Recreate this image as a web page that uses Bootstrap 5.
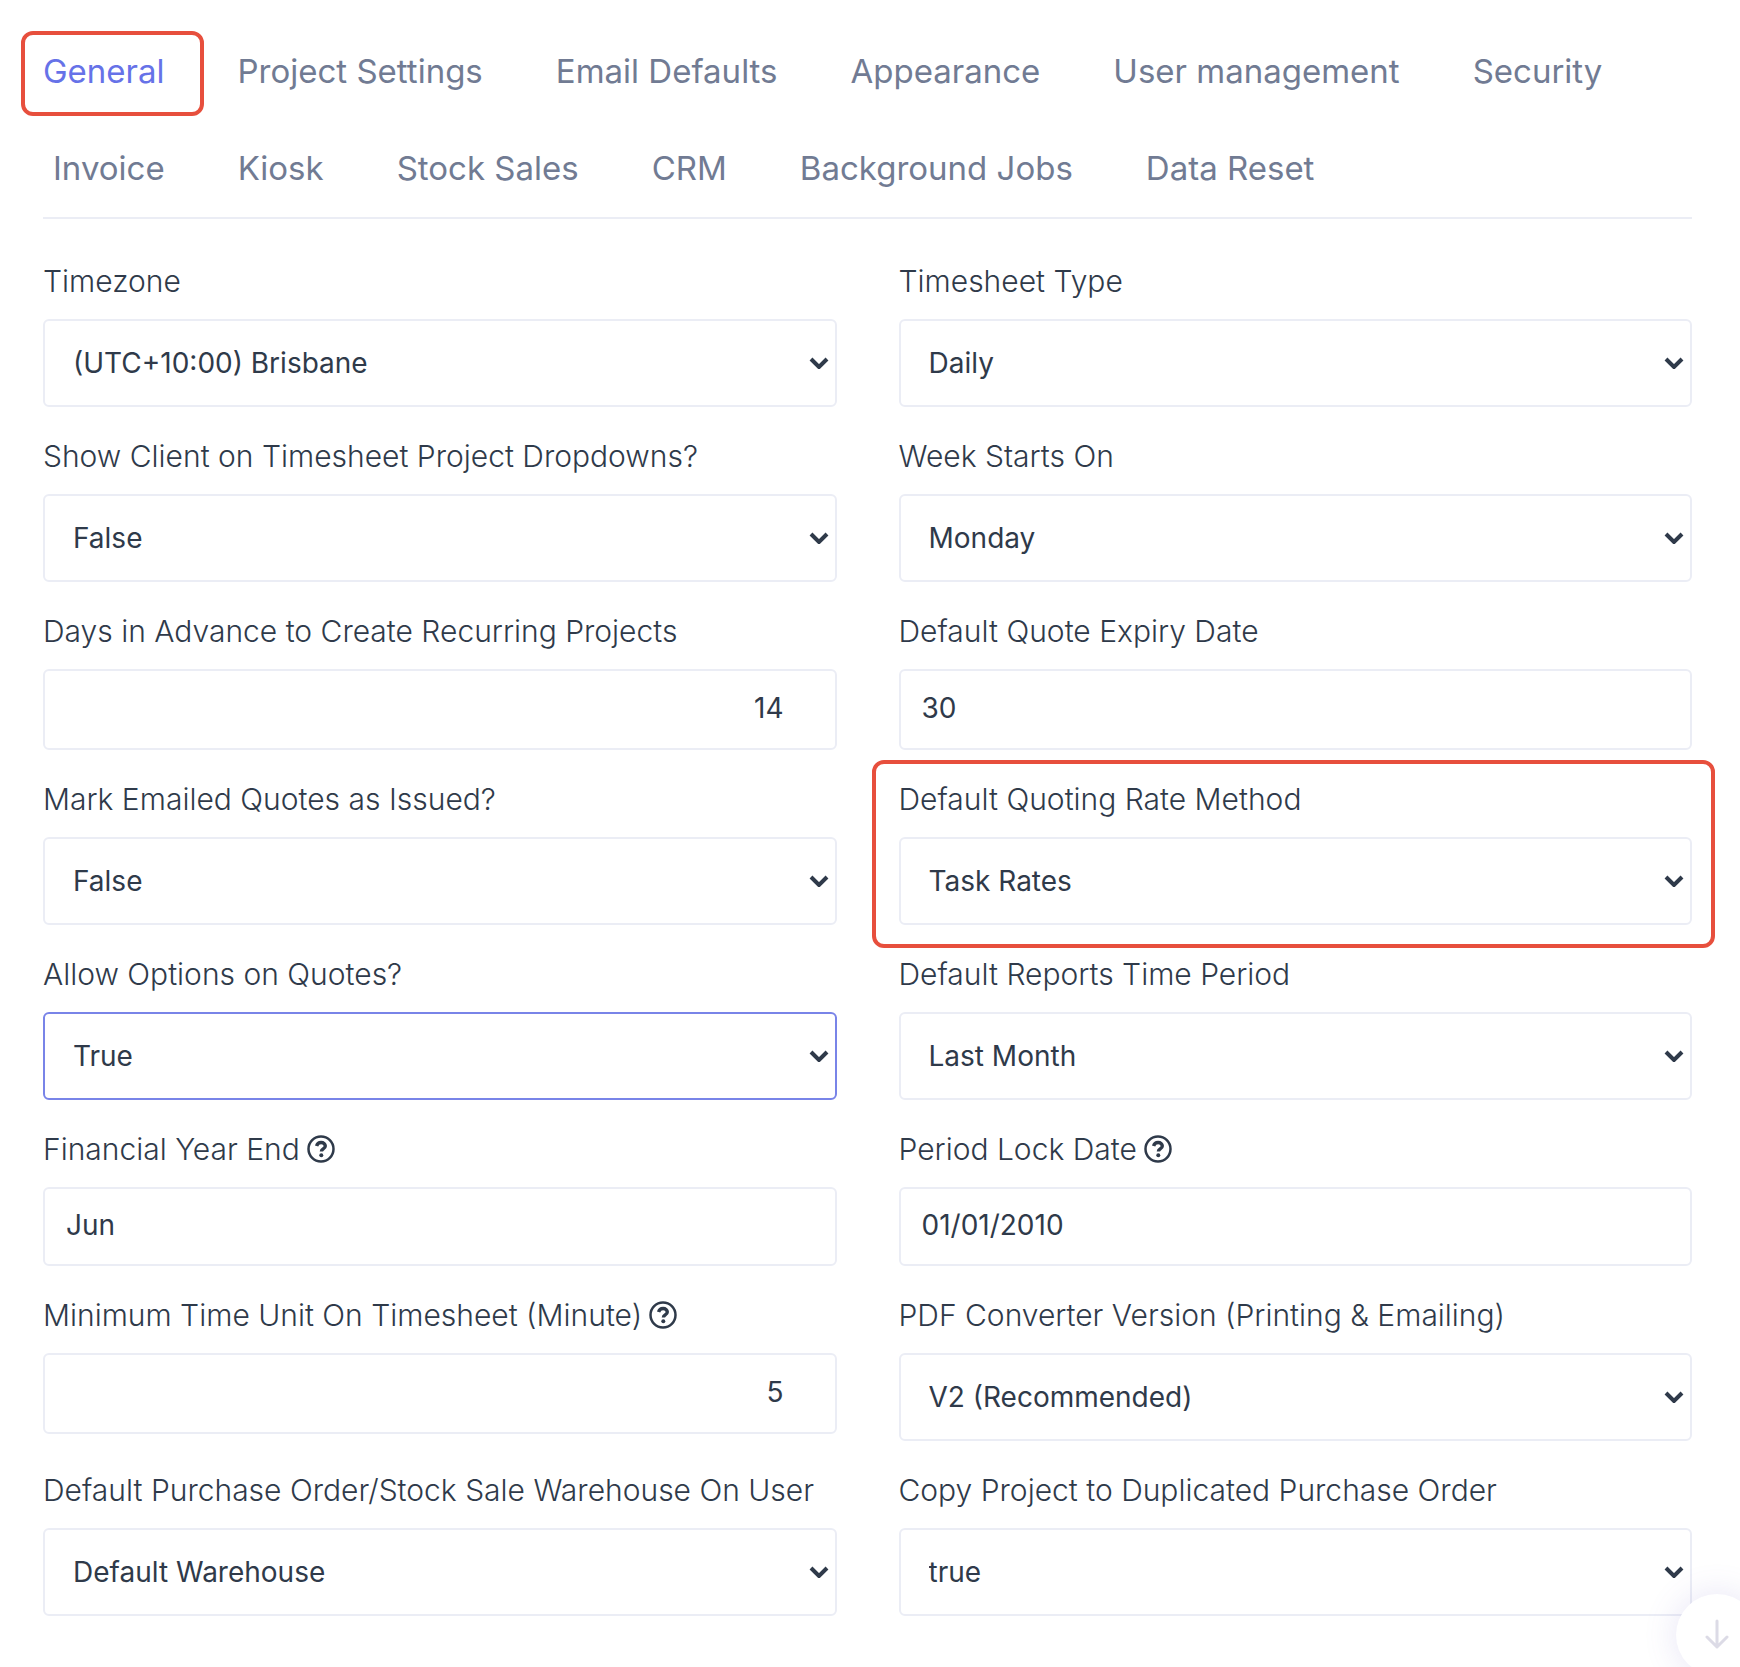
<!DOCTYPE html>
<html lang="en">
<head>
<meta charset="utf-8">
<meta name="viewport" content="width=device-width, initial-scale=1">
<title>System Settings</title>
<link href="https://cdn.jsdelivr.net/npm/bootstrap@5.3.0/dist/css/bootstrap.min.css" rel="stylesheet">
<style>
  :root {
    --ink: #2f3a4a;
    --line: #ebedf5;
    --accent: #6672e8;
    --callout: #e74f3d;
  }
  body { font-family: Inter, "Open Sans", sans-serif; color: var(--ink); background: #fff; }
  .settings-page { padding: 23px 48px 24px 43px; }

  .settings-tabs { column-gap: 63px; border-bottom: 2px solid var(--line); }
  .settings-tabs .nav-link { padding: 0 0 0 10px; font-size: 33px; line-height: 97px; color: #717b93; }
  .settings-tabs .nav-item:first-child .nav-link { padding-left: 0; }
  .settings-tabs .nav-link.active { color: var(--accent); }

  .settings-grid { --bs-gutter-x: 62px; padding-top: 40px; }
  .field { margin-bottom: 27px; }
  .field .form-label { display: flex; align-items: center; gap: 7px; margin-bottom: 16px; font-size: 30px; font-weight: 300; line-height: 44px; white-space: nowrap; }
  .field .form-select, .field .form-control { border: 2px solid var(--line); border-radius: 6px; font-size: 28px; line-height: 40px; color: var(--ink); background-color: #fff; box-shadow: none; }
  .field .form-select {
    height: 88px; padding: 0 54px 0 28px;
    background-image: url("data:image/svg+xml,%3Csvg xmlns='http://www.w3.org/2000/svg' viewBox='0 0 20 12'%3E%3Cpath d='M2 2l8 8 8-8' fill='none' stroke='%232f3a4a' stroke-width='4'/%3E%3C/svg%3E");
    background-size: 20px 12px; background-position: right 6px center;
  }
  .field .form-control { height: 81px; padding: 0 51px 4px 21px; }
  .field .form-control.picker { height: 79px; }
  .field .form-select.current { border-color: #7984e8; }
  .help-icon { width: 28px; height: 28px; flex: none; }

  .callout { position: relative; }
  .callout::after { content: ""; position: absolute; border: 4px solid var(--callout); border-radius: 12px; pointer-events: none; }
  .callout-tab::after { inset: 8px -39px 4px -22px; }
  .callout-field::after { inset: -17px -23px -23px -27px; }

  .scroll-btn { position: fixed; right: -18px; bottom: -9px; width: 82px; height: 82px; border: 0; border-radius: 50%; background: #fff; box-shadow: 0 0 34px rgba(100, 90, 190, .16); }
</style>
</head>
<body>
<main class="settings-page">
  <ul class="nav settings-tabs">
    <li class="nav-item callout callout-tab"><a class="nav-link active" href="#general" aria-current="page">General</a></li>
    <li class="nav-item"><a class="nav-link" href="#project">Project Settings</a></li>
    <li class="nav-item"><a class="nav-link" href="#email">Email Defaults</a></li>
    <li class="nav-item"><a class="nav-link" href="#appearance">Appearance</a></li>
    <li class="nav-item"><a class="nav-link" href="#users">User management</a></li>
    <li class="nav-item"><a class="nav-link" href="#security">Security</a></li>
    <li class="nav-item"><a class="nav-link" href="#invoice">Invoice</a></li>
    <li class="nav-item"><a class="nav-link" href="#kiosk">Kiosk</a></li>
    <li class="nav-item"><a class="nav-link" href="#stock">Stock Sales</a></li>
    <li class="nav-item"><a class="nav-link" href="#crm">CRM</a></li>
    <li class="nav-item"><a class="nav-link" href="#jobs">Background Jobs</a></li>
    <li class="nav-item"><a class="nav-link" href="#reset">Data Reset</a></li>
  </ul>

  <form class="row settings-grid" id="general">
    <div class="col-6"><div class="field">
      <label class="form-label" for="timezone">Timezone</label>
      <select class="form-select" id="timezone"><option>(UTC+10:00) Brisbane</option></select>
    </div></div>
    <div class="col-6"><div class="field">
      <label class="form-label" for="sheetType">Timesheet Type</label>
      <select class="form-select" id="sheetType"><option>Daily</option></select>
    </div></div>

    <div class="col-6"><div class="field">
      <label class="form-label" for="showClient">Show Client on Timesheet Project Dropdowns?</label>
      <select class="form-select" id="showClient"><option>False</option><option>True</option></select>
    </div></div>
    <div class="col-6"><div class="field">
      <label class="form-label" for="weekStart">Week Starts On</label>
      <select class="form-select" id="weekStart"><option>Monday</option></select>
    </div></div>

    <div class="col-6"><div class="field">
      <label class="form-label" for="daysAdvance">Days in Advance to Create Recurring Projects</label>
      <input class="form-control text-end" id="daysAdvance" type="text" inputmode="numeric" value="14">
    </div></div>
    <div class="col-6"><div class="field">
      <label class="form-label" for="quoteExpiry">Default Quote Expiry Date</label>
      <input class="form-control" id="quoteExpiry" type="text" value="30">
    </div></div>

    <div class="col-6"><div class="field">
      <label class="form-label" for="markIssued">Mark Emailed Quotes as Issued?</label>
      <select class="form-select" id="markIssued"><option>False</option><option>True</option></select>
    </div></div>
    <div class="col-6"><div class="field callout callout-field">
      <label class="form-label" for="rateMethod">Default Quoting Rate Method</label>
      <select class="form-select" id="rateMethod"><option>Task Rates</option></select>
    </div></div>

    <div class="col-6"><div class="field">
      <label class="form-label" for="allowOptions">Allow Options on Quotes?</label>
      <select class="form-select current" id="allowOptions"><option>True</option><option>False</option></select>
    </div></div>
    <div class="col-6"><div class="field">
      <label class="form-label" for="reportPeriod">Default Reports Time Period</label>
      <select class="form-select" id="reportPeriod"><option>Last Month</option></select>
    </div></div>

    <div class="col-6"><div class="field">
      <label class="form-label" for="yearEnd">Financial Year End
        <svg class="help-icon" viewBox="0 0 28 28" fill="none" stroke="currentColor" aria-hidden="true"><circle cx="14" cy="14" r="12.5" stroke-width="2.5"/><path d="M9.6 11c.6-2.300 2.200-3.500 4.500-3.500 2.400 0 4.200 1.400 4.200 3.500 0 2.900-3.900 2.900-3.900 5.400" stroke-width="3.400"/><circle cx="14.300" cy="20.300" r="2" fill="currentColor" stroke="none"/></svg></label>
      <input class="form-control picker" id="yearEnd" type="text" value="Jun">
    </div></div>
    <div class="col-6"><div class="field">
      <label class="form-label" for="lockDate">Period Lock Date
        <svg class="help-icon" viewBox="0 0 28 28" fill="none" stroke="currentColor" aria-hidden="true"><circle cx="14" cy="14" r="12.5" stroke-width="2.5"/><path d="M9.6 11c.6-2.300 2.200-3.500 4.500-3.500 2.400 0 4.200 1.400 4.200 3.500 0 2.900-3.900 2.900-3.900 5.400" stroke-width="3.400"/><circle cx="14.300" cy="20.300" r="2" fill="currentColor" stroke="none"/></svg></label>
      <input class="form-control picker" id="lockDate" type="text" value="01/01/2010">
    </div></div>

    <div class="col-6"><div class="field">
      <label class="form-label" for="timeUnit">Minimum Time Unit On Timesheet (Minute)
        <svg class="help-icon" viewBox="0 0 28 28" fill="none" stroke="currentColor" aria-hidden="true"><circle cx="14" cy="14" r="12.5" stroke-width="2.5"/><path d="M9.6 11c.6-2.300 2.200-3.500 4.500-3.500 2.400 0 4.200 1.400 4.200 3.500 0 2.900-3.900 2.900-3.900 5.400" stroke-width="3.400"/><circle cx="14.300" cy="20.300" r="2" fill="currentColor" stroke="none"/></svg></label>
      <input class="form-control text-end" id="timeUnit" type="text" inputmode="numeric" value="5">
    </div></div>
    <div class="col-6"><div class="field">
      <label class="form-label" for="pdfVersion">PDF Converter Version (Printing &amp; Emailing)</label>
      <select class="form-select" id="pdfVersion"><option>V2 (Recommended)</option></select>
    </div></div>

    <div class="col-6"><div class="field">
      <label class="form-label" for="warehouse">Default Purchase Order/Stock Sale Warehouse On User</label>
      <select class="form-select" id="warehouse"><option>Default Warehouse</option></select>
    </div></div>
    <div class="col-6"><div class="field">
      <label class="form-label" for="copyProject">Copy Project to Duplicated Purchase Order</label>
      <select class="form-select" id="copyProject"><option>true</option><option>false</option></select>
    </div></div>
  </form>
</main>

<button class="scroll-btn d-flex align-items-center justify-content-center p-0" type="button" aria-label="Scroll down">
  <svg width="24" height="32" viewBox="0 0 24 32" fill="none" stroke="#dcdbe6" stroke-width="3" stroke-linecap="round" stroke-linejoin="round" aria-hidden="true"><path d="M12 2v26M2 18l10 10 10-10"/></svg>
</button>
<script src="https://cdn.jsdelivr.net/npm/bootstrap@5.3.0/dist/js/bootstrap.bundle.min.js"></script>
</body>
</html>
